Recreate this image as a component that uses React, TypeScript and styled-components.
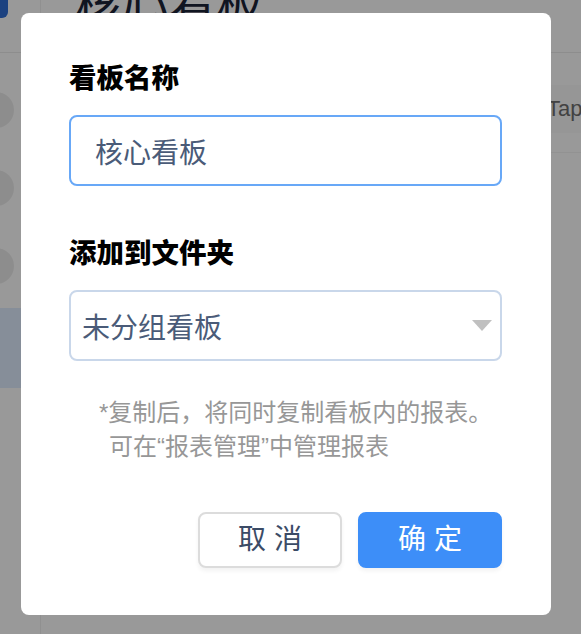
import React from "react";
import styled, { createGlobalStyle } from "styled-components";

const GlobalStyle = createGlobalStyle`
    html, body {
        margin: 0;
        padding: 0;
        background: #fff;
        font-family: "Liberation Sans", "Noto Sans CJK SC", sans-serif;
    }
    * {
        box-sizing: border-box;
    }
`;

/* 背景のページ */
const Page = styled.div`
    display: flex;
    height: 634px;
    overflow: hidden;
`;
const Sidebar = styled.aside`
    width: 41px;
    flex-shrink: 0;
    display: flex;
    flex-direction: column;
    border-right: 1px solid #f0f0f0;
`;
const Logo = styled.div`
    width: 30px;
    height: 30px;
    margin: -12px 0 0 -22px;
    border-radius: 6px;
    background: #2f6fd6;
`;
const SideTop = styled.div`
    height: 53px;
    border-bottom: 1px solid #ececec;
`;
const Avatars = styled.div`
    display: flex;
    flex-direction: column;
    gap: 42px;
    padding-top: 39px;
`;
const Avatar = styled.span`
    display: block;
    width: 36px;
    height: 36px;
    margin-left: -22px;
    border-radius: 50%;
    background: #ececec;
`;
const ActiveItem = styled.div`
    height: 80px;
    margin-top: 24px;
    background: #dfedff;
`;
const Main = styled.main`
    flex: 1;
    min-width: 0;
    display: flex;
    flex-direction: column;
`;
const Header = styled.header`
    height: 53px;
    padding-left: 34px;
    border-bottom: 1px solid #ececec;
    overflow: hidden;
`;
const BoardTitle = styled.h1`
    margin: -22px 0 0;
    font-size: 47px;
    font-weight: 400;
    line-height: 56px;
    color: #1b2438;
`;
const Toolbar = styled.div`
    display: flex;
    justify-content: flex-end;
    align-items: center;
    height: 100px;
    padding-top: 12px;
    border-bottom: 1px solid #f4f4f4;
`;
const TabLabel = styled.span`
    width: 34px;
    height: 48px;
    line-height: 48px;
    overflow: hidden;
    white-space: nowrap;
    font-size: 22px;
    color: #6e6e6e;
    background: #fafafa;
`;

/* モーダル */
const Mask = styled.div`
    position: fixed;
    inset: 0;
    background: rgba(0, 0, 0, 0.4);
    display: flex;
    align-items: flex-start;
    padding: 13px 0 0 21px;
`;
const Dialog = styled.div`
    width: 530px;
    padding: 48px 49px 47px 48px;
    background: #fff;
    border-radius: 8px;
`;
const Label = styled.div<{ $gap?: number }>`
    margin-top: ${(p) => p.$gap || 0}px;
    margin-bottom: 18px;
    font-size: 27.5px;
    font-weight: 800;
    line-height: 36px;
    color: #000;
`;
const Field = styled.div<{ $focus?: boolean }>`
    display: flex;
    align-items: center;
    justify-content: space-between;
    height: 71px;
    padding: 0 8px 0 ${(p) => (p.$focus ? 24 : 11)}px;
    border: 2px solid ${(p) => (p.$focus ? "#68a8f7" : "#c9d7ea")};
    border-radius: 8px;
    font-size: 28px;
    color: #4a5b78;
`;
const Caret = styled.span`
    width: 0;
    height: 0;
    border-left: 10px solid transparent;
    border-right: 10px solid transparent;
    border-top: 11px solid #c0c0c0;
`;
const Note = styled.div`
    margin-top: 35px;
    padding-left: 30px;
    font-size: 24px;
    line-height: 34px;
    color: #979797;
`;
const NoteLine = styled.div<{ $indent?: number }>`
    padding-left: ${(p) => p.$indent || 0}px;
    white-space: nowrap;
`;
const Actions = styled.div`
    display: flex;
    justify-content: flex-end;
    gap: 16px;
    margin-top: 48px;
`;
const Button = styled.button<{ $primary?: boolean }>`
    width: 144px;
    height: 56px;
    border-radius: 8px;
    border: 2px solid ${(p) => (p.$primary ? "#3d8ef8" : "#dcdcdc")};
    background: ${(p) => (p.$primary ? "#3d8ef8" : "#fff")};
    color: ${(p) => (p.$primary ? "#fff" : "#3b4b66")};
    font-family: inherit;
    font-size: 28px;
    line-height: 1;
    box-shadow: 0 3px 4px rgba(0, 0, 0, 0.05);
`;

export default function App() {
    return (
        <>
            <GlobalStyle />
            <Page>
                <Sidebar>
                    <SideTop>
                        <Logo />
                    </SideTop>
                    <Avatars>
                        <Avatar />
                        <Avatar />
                        <Avatar />
                    </Avatars>
                    <ActiveItem />
                </Sidebar>
                <Main>
                    <Header>
                        <BoardTitle>核心看板</BoardTitle>
                    </Header>
                    <Toolbar>
                        <TabLabel>Tapd</TabLabel>
                    </Toolbar>
                </Main>
            </Page>
            <Mask>
                <Dialog>
                    <Label>看板名称</Label>
                    <Field $focus>核心看板</Field>
                    <Label $gap={50}>添加到文件夹</Label>
                    <Field>
                        未分组看板
                        <Caret />
                    </Field>
                    <Note>
                        <NoteLine>*复制后，将同时复制看板内的报表。</NoteLine>
                        <NoteLine $indent={10}>可在“报表管理”中管理报表</NoteLine>
                    </Note>
                    <Actions>
                        <Button>取 消</Button>
                        <Button $primary>确 定</Button>
                    </Actions>
                </Dialog>
            </Mask>
        </>
    );
}
